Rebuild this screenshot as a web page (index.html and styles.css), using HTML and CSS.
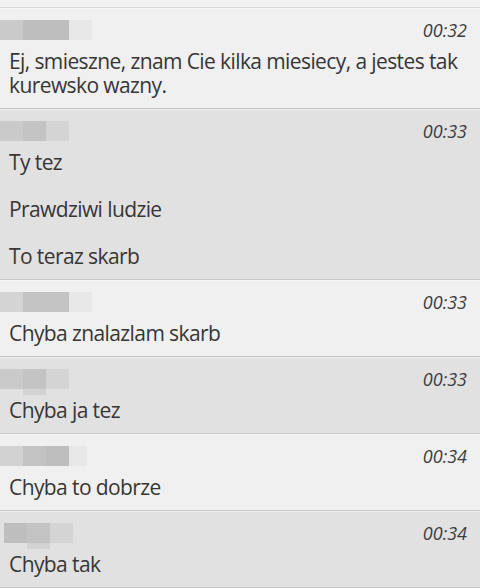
FILE: index.html
```html
<!DOCTYPE html>
<html lang="pl">
<head>
<meta charset="utf-8">
<title>Czat</title>
<link rel="stylesheet" href="styles.css">
</head>
<body>
<div class="strip"></div>
<ul class="list">
  <li class="msg light">
    <div class="head">
      <div class="blur"><div class="brow"><span class="c s3"></span><span class="c s1"></span><span class="c s1"></span><span class="c s6"></span></div></div>
      <span class="time">00:32</span>
    </div>
    <p class="text">Ej, smieszne, znam Cie kilka miesiecy, a jestes tak kurewsko wazny.</p>
  </li>
  <li class="msg dark">
    <div class="head">
      <div class="blur"><div class="brow"><span class="c s3"></span><span class="c s2"></span><span class="c s4"></span></div></div>
      <span class="time">00:33</span>
    </div>
    <div class="text">
      <p class="para">Ty tez</p>
      <p class="para">Prawdziwi ludzie</p>
      <p class="para">To teraz skarb</p>
    </div>
  </li>
  <li class="msg light">
    <div class="head">
      <div class="blur"><div class="brow"><span class="c s4"></span><span class="c s2"></span><span class="c s2"></span><span class="c s6"></span></div></div>
      <span class="time">00:33</span>
    </div>
    <p class="text">Chyba znalazlam skarb</p>
  </li>
  <li class="msg dark">
    <div class="head">
      <div class="blur"><div class="brow"><span class="c s3"></span><span class="c s2"></span><span class="c s4"></span></div><div class="brow tail"><span class="c none"></span><span class="c s5"></span></div></div>
      <span class="time">00:33</span>
    </div>
    <p class="text">Chyba ja tez</p>
  </li>
  <li class="msg light">
    <div class="head">
      <div class="blur"><div class="brow"><span class="c s5"></span><span class="c s2"></span><span class="c s1"></span><span class="c s6 narrow"></span></div></div>
      <span class="time">00:34</span>
    </div>
    <p class="text">Chyba to dobrze</p>
  </li>
  <li class="msg dark">
    <div class="head">
      <div class="blur shift"><div class="brow"><span class="c s1"></span><span class="c s2"></span><span class="c s4"></span></div><div class="brow tail"><span class="c none"></span><span class="c s5"></span></div></div>
      <span class="time">00:34</span>
    </div>
    <p class="text">Chyba tak</p>
  </li>
</ul>
</body>
</html>
```

FILE: styles.css
```css
* { box-sizing: border-box; }
html, body {
  margin: 0;
  padding: 0;
  background: #e1e1e1;
  overflow: hidden;
}
body {
  width: 480px;
  height: 588px;
  font-family: "Open Sans", "Noto Sans", sans-serif;
  color: #363636;
}
.strip {
  height: 8px;
  background: #f1f1f1;
  border-bottom: 1px solid #d6d6d6;
}
.list {
  list-style: none;
  margin: 0;
  padding: 0;
}
.msg {
  border-top: 1px solid rgba(255, 255, 255, 0.45);
  border-bottom: 1px solid #c6c6c6;
  padding: 11px 13px 11px 9px;
}
.msg.light { background: #f0f0f0; }
.msg.dark { background: #e1e1e1; }
.head {
  height: 21px;
  display: flex;
  justify-content: space-between;
  align-items: flex-start;
}
.blur {
  margin-left: -9px;
  display: flex;
  flex-direction: column;
}
.blur.shift { margin-left: -5px; }
.brow { display: flex; }
.c {
  display: block;
  width: 23px;
  height: 20px;
}
.c.narrow { width: 18px; }
.tail .c { height: 6px; }
.s1 { background: #bebebe; }
.s2 { background: #c3c3c3; }
.s3 { background: #cacaca; }
.s4 { background: #d4d4d4; }
.s5 { background: #d2d2d2; }
.s6 { background: #e7e7e7; }
.none { background: transparent; }
.time {
  font-style: italic;
  font-size: 18px;
  line-height: 18px;
  color: #3c3c3c;
  margin-top: 1px;
}
.text {
  margin: 8px 0 0;
  font-size: 21px;
  line-height: 24px;
  letter-spacing: -0.6px;
}
.para { margin: 0; }
.para + .para { margin-top: 23px; }
```
